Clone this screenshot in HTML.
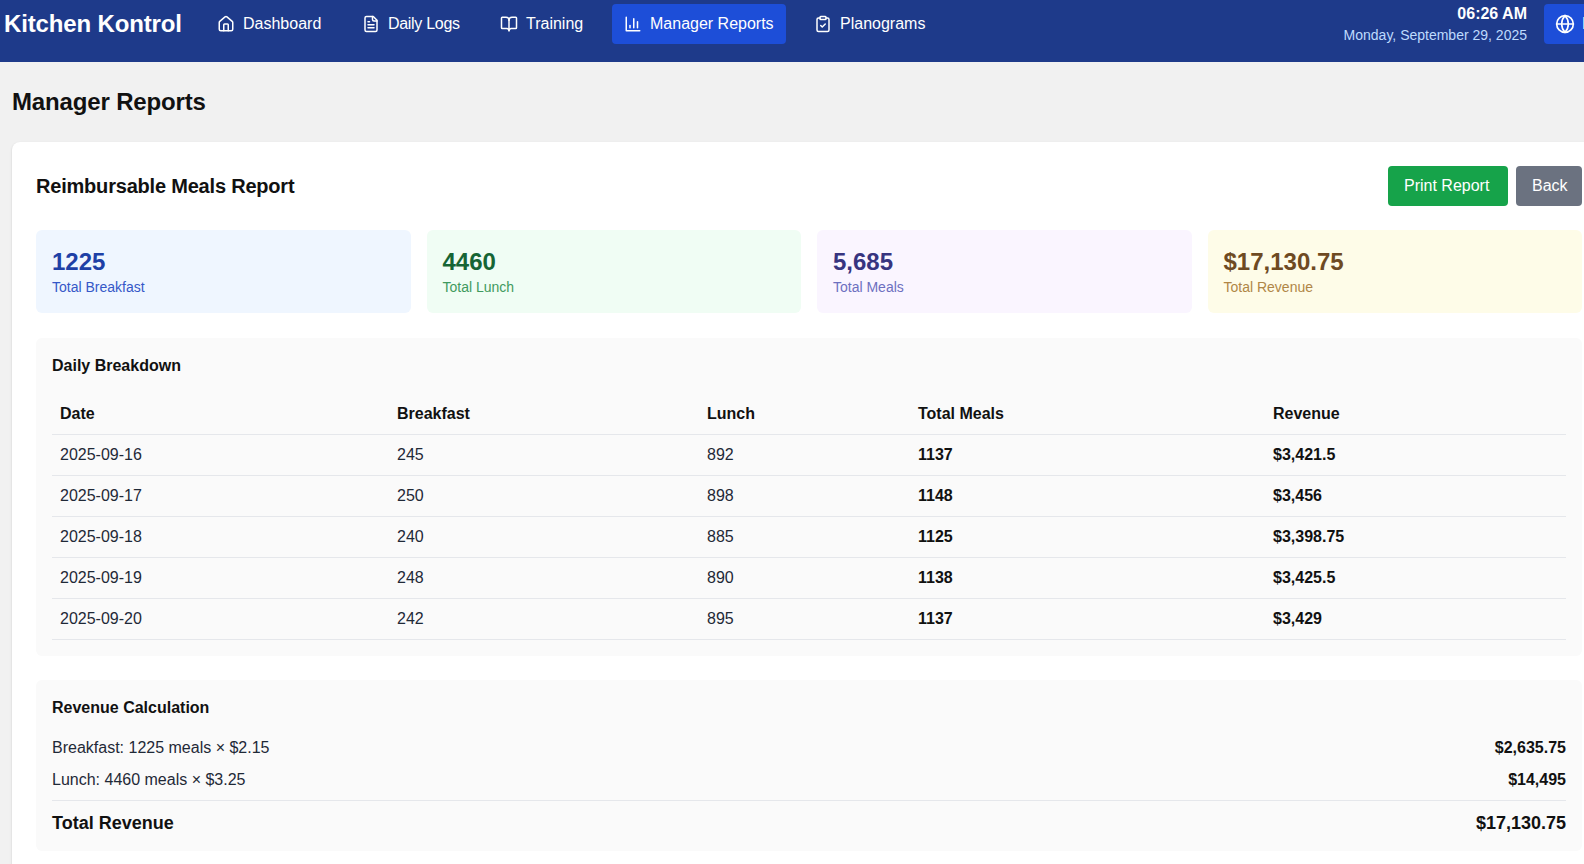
<!DOCTYPE html>
<html>
<head>
<meta charset="utf-8">
<style>
*{box-sizing:border-box;margin:0;padding:0}
html,body{width:1584px;height:864px;overflow:hidden}
body{background:#f1f1f1;font-family:"Liberation Sans",sans-serif;color:#111827;position:relative}
.nav{position:absolute;left:0;top:0;width:1620px;height:62px;background:#1e3a8a}
.logo{position:absolute;left:4px;top:8px;font-size:24px;line-height:32px;font-weight:bold;color:#fff;white-space:nowrap;letter-spacing:-0.15px}
.nb{position:absolute;top:4px;height:40px;border-radius:4px;color:#fff;font-size:16px;line-height:24px;padding:8px 12px;display:flex;align-items:center;white-space:nowrap}
.nb svg{width:18px;height:18px;flex:none;margin-right:8px}
.nb.active{background:#1d4ed8}
.time{position:absolute;right:57px;top:3px;text-align:right;white-space:nowrap}
.time .t{font-size:16px;line-height:22px;font-weight:bold;color:#fff}
.time .d{font-size:14px;line-height:18px;margin-top:0.5px;color:#bfdbfe}
.globe{position:absolute;left:1544px;top:4px;width:80px;height:40px;border-radius:4px;background:#1d4ed8;padding:10px 11px;display:flex;align-items:center;color:#fff;font-size:16px;line-height:24px}
.globe svg{width:20px;height:20px;flex:none;margin-right:7px}
h1{position:absolute;left:12px;top:85.5px;font-size:24px;line-height:32px;font-weight:bold;color:#111;letter-spacing:-0.15px}
.card{position:absolute;left:12px;top:142px;width:1594px;height:740px;background:#fff;border-radius:8px;box-shadow:0 1px 3px rgba(0,0,0,.1),0 1px 2px rgba(0,0,0,.06)}
.ct{position:absolute;left:24px;top:30px;font-size:20px;line-height:28px;font-weight:bold;color:#111;letter-spacing:-0.2px}
.btn{position:absolute;top:24px;height:40px;border-radius:4px;color:#fff;font-size:16px;line-height:24px;padding:8px 16px;white-space:nowrap}
.stats{position:absolute;left:24px;top:88px;width:1546px;display:flex;gap:16px}
.stat{flex:1;height:83px;border-radius:6px;padding:16px}
.stat .n{font-size:24px;line-height:32px;font-weight:bold}
.stat .l{font-size:14px;line-height:20px;margin-top:-1px}
.panel{position:absolute;left:24px;width:1546px;background:#fafafa;border-radius:6px;padding:16px}
.ptitle{font-size:16px;line-height:24px;font-weight:bold;color:#111}
table{border-collapse:collapse;width:1514px;margin-top:16px}
th,td{text-align:left;font-size:16px;line-height:24px;padding:8px 8px;border-bottom:1px solid #e5e7eb;color:#1f2937}
th{font-weight:bold;color:#111}
td.b{font-weight:bold;color:#111}
.row{display:flex;justify-content:space-between;font-size:16px;line-height:24px;color:#1f2937}
.row b{color:#111}
.total{border-top:1px solid #e5e7eb;font-size:18px;line-height:28px;font-weight:bold;color:#111}
</style>
</head>
<body>
<div class="nav">
  <div class="logo">Kitchen Kontrol</div>
  <div class="nb" style="left:205px"><svg viewBox="0 0 24 24" fill="none" stroke="#fff" stroke-width="2" stroke-linecap="round" stroke-linejoin="round"><path d="M15 21v-8a1 1 0 0 0-1-1h-4a1 1 0 0 0-1 1v8"/><path d="M3 10a2 2 0 0 1 .709-1.528l7-5.999a2 2 0 0 1 2.582 0l7 5.999A2 2 0 0 1 21 10v9a2 2 0 0 1-2 2H5a2 2 0 0 1-2-2z"/></svg>Dashboard</div>
  <div class="nb" style="left:350px;letter-spacing:-0.3px"><svg viewBox="0 0 24 24" fill="none" stroke="#fff" stroke-width="2" stroke-linecap="round" stroke-linejoin="round"><path d="M15 2H6a2 2 0 0 0-2 2v16a2 2 0 0 0 2 2h12a2 2 0 0 0 2-2V7Z"/><path d="M14 2v4a2 2 0 0 0 2 2h4"/><path d="M10 9H8"/><path d="M16 13H8"/><path d="M16 17H8"/></svg>Daily Logs</div>
  <div class="nb" style="left:488px"><svg viewBox="0 0 24 24" fill="none" stroke="#fff" stroke-width="2" stroke-linecap="round" stroke-linejoin="round"><path d="M12 7v14"/><path d="M3 18a1 1 0 0 1-1-1V4a1 1 0 0 1 1-1h5a4 4 0 0 1 4 4 4 4 0 0 1 4-4h5a1 1 0 0 1 1 1v13a1 1 0 0 1-1 1h-6a3 3 0 0 0-3 3 3 3 0 0 0-3-3z"/></svg>Training</div>
  <div class="nb active" style="left:612px;width:174px"><svg viewBox="0 0 24 24" fill="none" stroke="#fff" stroke-width="2" stroke-linecap="round" stroke-linejoin="round"><path d="M3 3v18h18"/><path d="M18 17V9"/><path d="M13 17V5"/><path d="M8 17v-3"/></svg>Manager Reports</div>
  <div class="nb" style="left:802px"><svg viewBox="0 0 24 24" fill="none" stroke="#fff" stroke-width="2" stroke-linecap="round" stroke-linejoin="round"><rect width="8" height="4" x="8" y="2" rx="1" ry="1"/><path d="M16 4h2a2 2 0 0 1 2 2v14a2 2 0 0 1-2 2H6a2 2 0 0 1-2-2V6a2 2 0 0 1 2-2h2"/><path d="m9 14 2 2 4-4"/></svg>Planograms</div>
  <div class="time" style="left:auto;right:auto;width:240px;left:1287px"><div class="t">06:26 AM</div><div class="d">Monday, September 29, 2025</div></div>
  <div class="globe"><svg viewBox="0 0 24 24" fill="none" stroke="#fff" stroke-width="2" stroke-linecap="round" stroke-linejoin="round"><circle cx="12" cy="12" r="10"/><path d="M12 2a14.5 14.5 0 0 0 0 20 14.5 14.5 0 0 0 0-20"/><path d="M2 12h20"/></svg>EN</div>
</div>

<h1>Manager Reports</h1>

<div class="card">
  <div class="ct">Reimbursable Meals Report</div>
  <div class="btn" style="left:1376px;width:120px;background:#16a34a">Print Report</div>
  <div class="btn" style="left:1504px;width:66px;background:#6b7280">Back</div>

  <div class="stats">
    <div class="stat" style="background:#eff6ff"><div class="n" style="color:#1e40a6">1225</div><div class="l" style="color:#3558c8">Total Breakfast</div></div>
    <div class="stat" style="background:#f0fdf4"><div class="n" style="color:#166534">4460</div><div class="l" style="color:#3f9a5e">Total Lunch</div></div>
    <div class="stat" style="background:#faf5ff"><div class="n" style="color:#37347f">5,685</div><div class="l" style="color:#6d70bf">Total Meals</div></div>
    <div class="stat" style="background:#fefce8"><div class="n" style="color:#6e4a22">$17,130.75</div><div class="l" style="color:#b08646">Total Revenue</div></div>
  </div>

  <div class="panel" style="top:196px;height:318px">
    <div class="ptitle">Daily Breakdown</div>
    <table>
      <colgroup><col style="width:337px"><col style="width:310px"><col style="width:211px"><col style="width:355px"><col style="width:301px"></colgroup>
      <tr><th>Date</th><th>Breakfast</th><th>Lunch</th><th>Total Meals</th><th>Revenue</th></tr>
      <tr><td>2025-09-16</td><td>245</td><td>892</td><td class="b">1137</td><td class="b">$3,421.5</td></tr>
      <tr><td>2025-09-17</td><td>250</td><td>898</td><td class="b">1148</td><td class="b">$3,456</td></tr>
      <tr><td>2025-09-18</td><td>240</td><td>885</td><td class="b">1125</td><td class="b">$3,398.75</td></tr>
      <tr><td>2025-09-19</td><td>248</td><td>890</td><td class="b">1138</td><td class="b">$3,425.5</td></tr>
      <tr><td>2025-09-20</td><td>242</td><td>895</td><td class="b">1137</td><td class="b">$3,429</td></tr>
    </table>
  </div>

  <div class="panel" style="top:538px;height:171px">
    <div class="ptitle" style="margin-bottom:16px">Revenue Calculation</div>
    <div class="row" style="margin-bottom:8px"><span>Breakfast: 1225 meals × $2.15</span><b>$2,635.75</b></div>
    <div class="row" style="margin-bottom:8px"><span>Lunch: 4460 meals × $3.25</span><b>$14,495</b></div>
    <div class="row total" style="padding-top:8px"><span>Total Revenue</span><span>$17,130.75</span></div>
  </div>
</div>
</body>
</html>
